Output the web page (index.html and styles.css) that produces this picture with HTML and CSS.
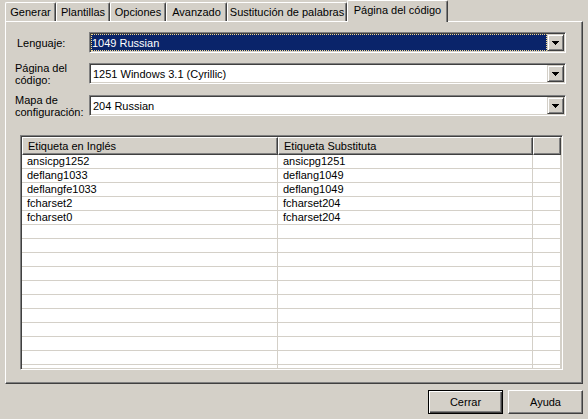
FILE: index.html
```html
<!DOCTYPE html>
<html>
<head>
<meta charset="utf-8">
<title>Página del código</title>
<link rel="stylesheet" href="styles.css">
</head>
<body>
<div class="dialog">
  <div class="tabs">
    <div class="tab w1">Generar</div>
    <div class="tab w2">Plantillas</div>
    <div class="tab w3">Opciones</div>
    <div class="tab w4">Avanzado</div>
    <div class="tab w5">Sustitución de palabras</div>
    <div class="tab active w6">Página del código</div>
  </div>
  <div class="panel">
    <div class="form">
      <div class="row">
        <div class="lbl lbl-single">Lenguaje:</div>
        <div class="combo">
          <div class="field selected"><span>1049 Russian</span></div>
          <div class="drop"><svg width="7" height="4" viewBox="0 0 7 4"><path d="M0 0h7v1H0zM1 1h5v1H1zM2 2h3v1H2zM3 3h1v1H3z" fill="#000"/></svg></div>
        </div>
      </div>
      <div class="row">
        <div class="lbl">Página del<br>código:</div>
        <div class="combo">
          <div class="field"><span>1251 Windows 3.1 (Cyrillic)</span></div>
          <div class="drop"><svg width="7" height="4" viewBox="0 0 7 4"><path d="M0 0h7v1H0zM1 1h5v1H1zM2 2h3v1H2zM3 3h1v1H3z" fill="#000"/></svg></div>
        </div>
      </div>
      <div class="row r3">
        <div class="lbl">Mapa de<br>configuración:</div>
        <div class="combo">
          <div class="field"><span>204 Russian</span></div>
          <div class="drop"><svg width="7" height="4" viewBox="0 0 7 4"><path d="M0 0h7v1H0zM1 1h5v1H1zM2 2h3v1H2zM3 3h1v1H3z" fill="#000"/></svg></div>
        </div>
      </div>
    </div>
    <div class="list">
      <table>
        <colgroup><col class="c1"><col class="c2"><col class="c3"></colgroup>
        <thead>
          <tr><th>Etiqueta en Inglés</th><th>Etiqueta Substituta</th><th></th></tr>
        </thead>
        <tbody>
          <tr><td>ansicpg1252</td><td>ansicpg1251</td><td></td></tr>
          <tr><td>deflang1033</td><td>deflang1049</td><td></td></tr>
          <tr><td>deflangfe1033</td><td>deflang1049</td><td></td></tr>
          <tr><td>fcharset2</td><td>fcharset204</td><td></td></tr>
          <tr><td>fcharset0</td><td>fcharset204</td><td></td></tr>
          <tr><td></td><td></td><td></td></tr>
          <tr><td></td><td></td><td></td></tr>
          <tr><td></td><td></td><td></td></tr>
          <tr><td></td><td></td><td></td></tr>
          <tr><td></td><td></td><td></td></tr>
          <tr><td></td><td></td><td></td></tr>
          <tr><td></td><td></td><td></td></tr>
          <tr><td></td><td></td><td></td></tr>
          <tr><td></td><td></td><td></td></tr>
          <tr><td></td><td></td><td></td></tr>
          <tr><td></td><td></td><td></td></tr>
        </tbody>
      </table>
    </div>
  </div>
  <div class="buttons">
    <button class="btn default">Cerrar</button>
    <button class="btn">Ayuda</button>
  </div>
</div>
</body>
</html>
```

FILE: styles.css
```css
html, body {
  margin: 0;
  padding: 0;
}
body {
  background: #d4d0c8;
  font-family: "Liberation Sans", Arial, sans-serif;
  font-size: 11px;
  color: #000;
  width: 588px;
  height: 419px;
  overflow: hidden;
}

/* Tabs */
.tabs {
  display: flex;
  align-items: flex-end;
  height: 21px;
  padding-left: 5px;
}
.tab {
  box-sizing: border-box;
  height: 19px;
  border-top: 1px solid #fff;
  border-left: 1px solid #fff;
  border-right: 1px solid #404040;
  box-shadow: inset -1px 0 #808080;
  border-radius: 2px 2px 0 0;
  display: flex;
  align-items: center;
  justify-content: center;
  padding-bottom: 1px;
  white-space: nowrap;
}
.tab.active {
  position: relative;
  z-index: 1;
  height: 22px;
  margin-bottom: -1px;
  background: #d4d0c8;
  padding-bottom: 3px;
}
.w1 { width: 51px; }
.w2 { width: 54px; }
.w3 { width: 56px; }
.w4 { width: 61px; }
.w5 { width: 120px; }
.w6 { width: 101px; }

/* Panel */
.panel {
  box-sizing: border-box;
  margin-left: 5px;
  width: 578px;
  height: 363px;
  border: 1px solid;
  border-color: #fff #404040 #404040 #fff;
  box-shadow: inset -1px -1px #808080;
  padding: 10px 16px 0 9px;
}

.form {
  display: flex;
  flex-direction: column;
}
.row {
  display: flex;
  height: 21px;
  align-items: center;
}
.row + .row {
  margin-top: 10px;
}
.row.r3 {
  margin-top: 11px;
}
.lbl {
  width: 74px;
  line-height: 12px;
  flex: none;
}
.lbl-single {
  padding-left: 2px;
  box-sizing: border-box;
}

.combo {
  box-sizing: border-box;
  width: 477px;
  height: 21px;
  display: flex;
  border: 1px solid;
  border-color: #808080 #fff #fff #808080;
  box-shadow: inset 1px 1px #404040, inset -1px -1px #d4d0c8;
  padding: 1px;
  background: #fff;
}
.field {
  flex: 1;
  display: flex;
  align-items: center;
  padding-left: 2px;
  background: #fff;
}
.field.selected {
  background: #0a246a;
  color: #fff;
  outline: 1px dotted #f3d98c;
  outline-offset: -1px;
  padding-left: 1px;
}
.drop {
  box-sizing: border-box;
  width: 17px;
  height: 17px;
  flex: none;
  background: #d4d0c8;
  border: 1px solid;
  border-color: #d4d0c8 #404040 #404040 #d4d0c8;
  box-shadow: inset 1px 1px #fff, inset -1px -1px #808080;
  display: flex;
  align-items: center;
  justify-content: center;
}
.drop svg {
  display: block;
  margin-top: 1px;
}

/* List */
.list {
  box-sizing: border-box;
  margin: 19px 0 0 5px;
  width: 543px;
  height: 235px;
  border: 1px solid;
  border-color: #808080 #fff #fff #808080;
  box-shadow: inset 1px 1px #404040, inset -1px -1px #d4d0c8;
  padding: 1px;
  background: #fff;
  overflow: hidden;
}
.list table {
  border-collapse: separate;
  border-spacing: 0;
  table-layout: fixed;
  width: 539px;
}
.c1 { width: 256px; }
.c2 { width: 255px; }
.c3 { width: 28px; }
.list th {
  box-sizing: border-box;
  height: 18px;
  padding: 0 0 1px 5px;
  font-weight: normal;
  text-align: left;
  background: #d4d0c8;
  border-top: 1px solid #fff;
  border-left: 1px solid #fff;
  border-right: 1px solid #404040;
  border-bottom: 1px solid #404040;
  box-shadow: inset -1px -1px #808080;
  white-space: nowrap;
}
.list td {
  padding: 0 0 0 5px;
  height: 13px;
  line-height: 13px;
  border-bottom: 1px solid #d4d0c8;
  border-right: 1px solid #d4d0c8;
  white-space: nowrap;
}

/* Buttons */
.buttons {
  display: flex;
  justify-content: flex-end;
  gap: 5px;
  padding: 6px 5px 0 0;
}
.btn {
  box-sizing: border-box;
  width: 75px;
  height: 24px;
  font: inherit;
  color: #000;
  background: #d4d0c8;
  border: 1px solid;
  border-color: #fff #404040 #404040 #fff;
  box-shadow: inset -1px -1px #808080;
  padding: 0;
}
.btn.default {
  border: 1px solid #000;
  box-shadow: inset 1px 1px #fff, inset -1px -1px #404040, inset -2px -2px #808080;
}
```
